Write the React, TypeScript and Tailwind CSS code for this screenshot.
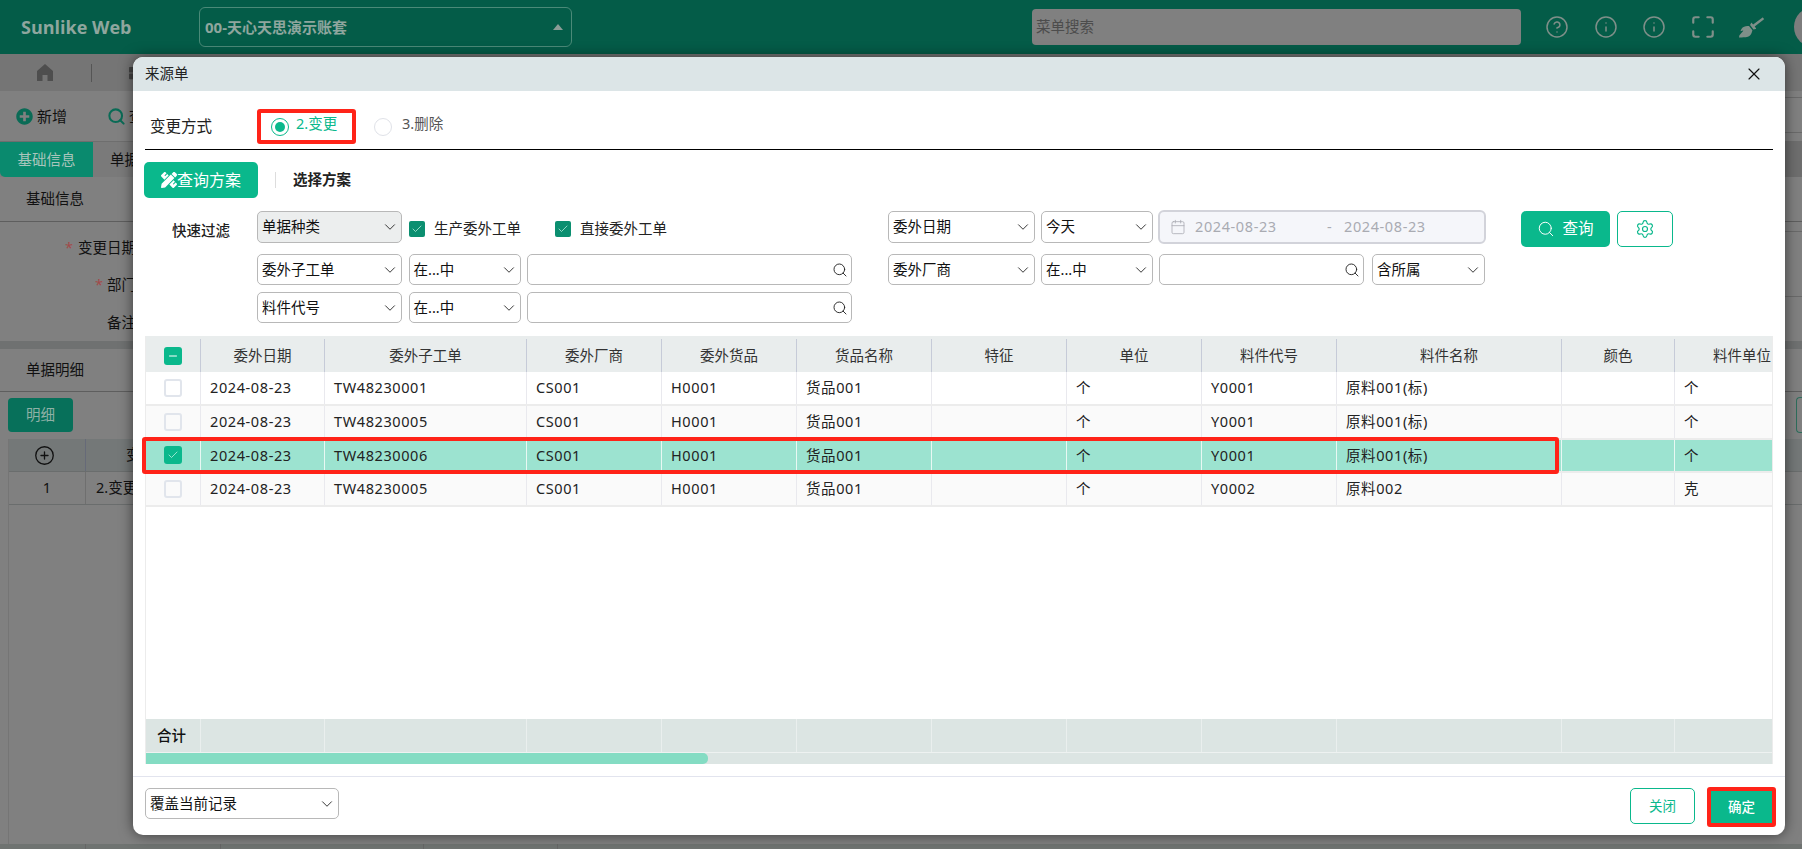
import { Calendar, ChevronDown, CircleHelp, CirclePlus, Info, Maximize, Search, Settings, X, Check, Minus } from "lucide-react";
import { FaBroom, FaPencilRuler, FaPlusCircle, FaThLarge } from "react-icons/fa";

function Sel({ w, label, grey }: { w: string; label: string; grey?: boolean }) {
  return (
    <div className={`${w} h-full flex items-center justify-between pl-[4px] pr-[2px] rounded-[5px] border-[1.5px] border-[#b8b8b8] text-[14.5px] text-[#111] ${grey ? "bg-[#eceeee]" : "bg-white"}`}>
      <span>{label}</span>
      <ChevronDown size={18} strokeWidth={1.2} className="text-[#222]" />
    </div>
  );
}

function SearchInput({ w }: { w: string }) {
  return (
    <div className={`${w} h-full flex items-center justify-end pr-[3px] rounded-[5px] border-[1.5px] border-[#b8b8b8] bg-white`}>
      <Search size={16} strokeWidth={1.4} className="text-[#222]" />
    </div>
  );
}

function Box({ label }: { label: string }) {
  return (
    <div className="h-full flex items-center">
      <span className="w-[16px] h-[16px] rounded-[2px] bg-[#0b8f70] flex items-center justify-center mt-[4px]">
        <Check size={12} strokeWidth={1.5} className="text-[#bdf1e1]" />
      </span>
      <span className="ml-[9px] text-[14.5px] text-[#222] mt-[4px]">{label}</span>
    </div>
  );
}

const widths = ["w-[55px]", "w-[124px]", "w-[202px]", "w-[135px]", "w-[135px]", "w-[135px]", "w-[135px]", "w-[135px]", "w-[135px]", "w-[225px]", "w-[113px]", "w-[135px]"];
const heads = ["委外日期", "委外子工单", "委外厂商", "委外货品", "货品名称", "特征", "单位", "料件代号", "料件名称", "颜色", "料件单位"];
const rows = [
  { id: "TW48230001", code: "Y0001", name: "原料001(标)", unit: "个", bg: "bg-white" },
  { id: "TW48230005", code: "Y0001", name: "原料001(标)", unit: "个", bg: "bg-[#fafafa]" },
  { id: "TW48230006", code: "Y0001", name: "原料001(标)", unit: "个", bg: "bg-[#9ce3d0]", sel: true },
  { id: "TW48230005", code: "Y0002", name: "原料002", unit: "克", bg: "bg-[#fafafa]" },
];

function Row({ r }: { r: (typeof rows)[number] }) {
  const cells = ["2024-08-23", r.id, "CS001", "H0001", "货品001", "", "个", r.code, r.name, "", r.unit];
  const line = r.sel ? "border-[#e8f8f3]" : "border-[#e9e9ee]";
  return (
    <div className={`flex h-[33.75px] w-[1664px] border-b-2 border-[#ececec] ${r.bg}`}>
      <div className={`${widths[0]} shrink-0 flex items-center justify-center border-r ${line}`}>
        {r.sel ? (
          <span className="w-[18px] h-[18px] rounded-[3px] bg-[#0ab88c] flex items-center justify-center">
            <Check size={12} strokeWidth={1.5} className="text-[#c4f3e4]" />
          </span>
        ) : (
          <span className="w-[18px] h-[18px] rounded-[3px] border-2 border-[#e1e5ec]" />
        )}
      </div>
      {cells.map((c, i) => (
        <div key={i} className={`${widths[i + 1]} shrink-0 flex items-center pl-[9px] border-r ${line} text-[14.5px] text-[#222] tracking-[0.6px]`}>
          {c}
        </div>
      ))}
    </div>
  );
}

function Background() {
  return (
    <div className="flex flex-col h-full">
      <div className="h-[54px] shrink-0 bg-[#045c48] flex items-center">
        <span className="shrink-0 ml-[21px] w-[178px] text-[18px] font-bold text-[#8fa69e] font-['Open_Sans',sans-serif]">Sunlike Web</span>
        <div className="shrink-0 w-[373px] h-[40px] rounded-[6px] border border-[#4b8a78] flex items-center justify-between pl-[5px] pr-[8px]">
          <span className="text-[15px] font-bold text-[#8fa69e]">00-天心天思演示账套</span>
          <span className="w-0 h-0 border-x-[5px] border-x-transparent border-b-[6px] border-b-[#8b9c96]" />
        </div>
        <div className="shrink-0 ml-[460px] w-[489px] h-[36px] rounded-[4px] bg-[#808080] flex items-center pl-[4px] text-[14.5px] text-[#4c4c4c]">菜单搜索</div>
        <div className="shrink-0 ml-[24px] flex items-center text-[#7f8f89]">
          <CircleHelp size={24} strokeWidth={1.5} className="shrink-0" />
          <Info size={24} strokeWidth={1.5} className="shrink-0 ml-[25px]" />
          <Info size={24} strokeWidth={1.5} className="shrink-0 ml-[24px]" />
          <Maximize size={26} strokeWidth={2} className="shrink-0 ml-[24px]" />
          <FaBroom size={25} className="shrink-0 ml-[23px]" />
          <span className="shrink-0 ml-[30px] w-[20px] h-[40px] rounded-l-full bg-[#7d7d7d]" />
        </div>
      </div>
      <div className="h-[37px] shrink-0 bg-[#757575] flex items-center">
        <svg width="18" height="19" viewBox="0 0 18 19" className="ml-[36px] text-[#4e4e4e]" fill="currentColor">
          <path d="M9 1 L17 8 V18 H11.5 V12 H6.5 V18 H1 V8 Z" />
        </svg>
        <span className="ml-[37px] w-px h-[18px] bg-[#555]" />
        <FaThLarge size={14} className="ml-[37px] text-[#444]" />
      </div>
      <div className="h-[51px] shrink-0 flex items-center border-b border-[#6e6e6e]">
        <FaPlusCircle size={17} className="ml-[16px] text-[#0a6b56]" />
        <span className="ml-[4px] text-[15px] text-[#111]">新增</span>
        <Search size={19} strokeWidth={2.6} className="ml-[40px] text-[#0a6b56]" />
        <span className="ml-[3px] text-[15px] text-[#111]">查</span>
        <div className="ml-auto mb-[2px] w-[17px] h-[36px] border-y border-[#6a6a6a]" />
      </div>
      <div className="h-[35px] shrink-0 flex bg-[#7a7a7a]">
        <div className="w-[93px] rounded-bl-[5px] bg-[#0a8a6e] flex items-center justify-center text-[14.5px] text-[#a9c5bc]">基础信息</div>
        <div className="pl-[17px] flex items-center text-[14.5px] text-[#111]">单据信息</div>
        <div className="ml-auto w-[17px] bg-[#6e6e6e]" />
      </div>
      <div className="h-[45px] shrink-0 pl-[26px] flex items-center border-b border-[#5e5e5e] text-[14.5px] text-[#111]">基础信息</div>
      <div className="h-[119px] shrink-0 flex">
        <div className="pt-[15px] flex flex-col items-end w-[136px] text-[14.5px] text-[#111]">
          <span><span className="text-[#a34a4a] mr-[5px]">*</span>变更日期</span>
          <span className="mt-[15px]"><span className="text-[#a34a4a] mr-[4px]">*</span>部门</span>
          <span className="mt-[16px]">备注</span>
        </div>
        <div className="ml-auto mt-[9px] w-[17px] h-[66px] border-y border-[#6a6a6a]" />
      </div>
      <div className="h-[8px] shrink-0 bg-[#6f7171]" />
      <div className="h-[43px] shrink-0 pl-[26px] flex items-center border-b border-[#5e5e5e] text-[14.5px] text-[#111]">单据明细</div>
      <div className="h-[47px] shrink-0 flex items-center pl-[8px] pb-[1px]">
        <div className="w-[65px] h-[34px] rounded-[4px] bg-[#07705a] flex items-center justify-center text-[14.5px] text-[#8fb0a6]">明细</div>
        <div className="ml-auto w-[6px] h-[36px] rounded-l-[4px] border-y border-l border-[#2e6e5c]" />
      </div>
      <div className="flex-1 ml-[8px] border-l border-[#757575] flex flex-col">
        <div className="h-[33px] shrink-0 bg-[#747878] flex items-center border-b border-[#6a6d6d]">
          <div className="w-[77px] flex justify-start pl-[25px] border-r border-[#666a78] h-full items-center">
            <CirclePlus size={21} strokeWidth={1.5} className="text-[#111]" />
          </div>
          <div className="pl-[40px] text-[14.5px] text-[#111]">变</div>
        </div>
        <div className="h-[33px] shrink-0 flex items-center border-b border-[#6a6d6d] text-[14.5px] text-[#111]">
          <div className="w-[77px] h-full flex items-center justify-center border-r border-[#6f6f6f]">1</div>
          <div className="pl-[10px]">2.变更</div>
        </div>
      </div>
      <div className="h-[5px] shrink-0 bg-[#6f7371] flex">
        <div className="w-[86px] border-r border-[#666]" />
        <div className="w-[135px] border-r border-[#666]" />
        <div className="w-[203px] border-r border-[#666]" />
        <div className="w-[134px] border-r border-[#666]" />
      </div>
    </div>
  );
}

export default function App() {
  return (
    <div className="relative h-[849px] w-[1802px] overflow-hidden bg-[#808080] font-['Noto_Sans','Noto_Sans_CJK_SC',sans-serif]">
      <Background />
      <div className="absolute left-[133px] top-[57px] w-[1652px] h-[778px] rounded-[10px] bg-white shadow-[0_0_14px_rgba(0,0,0,0.55)] flex flex-col">
        <div className="h-[34px] shrink-0 rounded-t-[10px] bg-[#dce5e7] flex items-center justify-between pl-[12px] pr-[21px]">
          <span className="text-[14.5px] text-[#222]">来源单</span>
          <X size={20} strokeWidth={1.4} className="text-[#111]" />
        </div>
        <div className="px-[12px]">
          <div className="h-[59px] border-b border-black pt-[13px] flex items-center">
            <div className="w-[112px] pl-[5px] text-[15.5px] text-[#222]">变更方式</div>
            <div className="w-[99px] h-[35px] rounded-[3px] border-[4px] border-[#ff2318] flex items-center pl-[10px]">
              <span className="w-[18px] h-[18px] rounded-full border border-[#0ab88c] flex items-center justify-center">
                <span className="w-[10px] h-[10px] rounded-full bg-[#0ab88c]" />
              </span>
              <span className="ml-[7px] text-[14.5px] text-[#0ab88c] -mt-[5px]">2.变更</span>
            </div>
            <span className="ml-[18px] w-[18px] h-[18px] rounded-full border border-[#e0e2e8]" />
            <span className="ml-[10px] text-[14.5px] text-[#555] -mt-[5px]">3.删除</span>
          </div>
          <div className="mt-[12px] h-[36px] flex items-center">
            <div className="-ml-px w-[114px] h-full rounded-[5px] bg-[#0ab88c] flex items-center pl-[17px] text-[16px] text-white">
              <FaPencilRuler size={16} />
              <span>查询方案</span>
            </div>
            <span className="ml-[17px] w-px h-[16px] bg-[#dddddd]" />
            <span className="ml-[17px] text-[14.5px] font-bold text-[#222]">选择方案</span>
          </div>
          <div className="mt-[13px] h-[112px] flex">
            <div className="w-[112px] pl-[27px] pt-[9px] text-[14.5px] font-medium text-[#222]">快速过滤</div>
            <div className="w-[595px] shrink-0">
              <div className="h-[32px] flex">
                <Sel w="w-[145px]" label="单据种类" grey />
                <div className="ml-[7px]"><Box label="生产委外工单" /></div>
                <div className="ml-[34px]"><Box label="直接委外工单" /></div>
              </div>
              <div className="mt-[11px] h-[31px] flex gap-[6.5px]">
                <Sel w="w-[145px]" label="委外子工单" />
                <Sel w="w-[112px]" label="在...中" />
                <SearchInput w="w-[325px]" />
              </div>
              <div className="mt-[7px] h-[31px] flex gap-[6.5px]">
                <Sel w="w-[145px]" label="料件代号" />
                <Sel w="w-[112px]" label="在...中" />
                <SearchInput w="w-[325px]" />
              </div>
            </div>
            <div className="ml-[36px] w-[598px] shrink-0">
              <div className="h-[32px] flex">
                <Sel w="w-[147px]" label="委外日期" />
                <div className="ml-[6px] h-full"><Sel w="w-[112px]" label="今天" /></div>
                <div className="ml-[5px] -mt-px w-[328px] h-[34px] rounded-[6px] border-2 border-[#d2d3da] bg-[#f5f6fa] flex items-center pl-[10px] text-[14.5px] tracking-[0.6px] text-[#a9abb2]">
                  <Calendar size={16} strokeWidth={1.2} className="shrink-0" />
                  <span className="ml-[9px] w-[132px] shrink-0">2024-08-23</span>
                  <span className="w-[17px] shrink-0">-</span>
                  <span>2024-08-23</span>
                </div>
              </div>
              <div className="mt-[11px] h-[31px] flex">
                <Sel w="w-[147px]" label="委外厂商" />
                <div className="ml-[6px] h-full"><Sel w="w-[112px]" label="在...中" /></div>
                <div className="ml-[6px] h-full"><SearchInput w="w-[205px]" /></div>
                <div className="ml-[8px] h-full"><Sel w="w-[113px]" label="含所属" /></div>
              </div>
            </div>
            <div className="ml-[35px] flex h-[36px] gap-[7px]">
              <div className="w-[89px] rounded-[5px] bg-[#0ab88c] flex items-center justify-center text-[15.5px] text-white">
                <Search size={18} strokeWidth={1.3} className="mr-[7px]" />
                <span>查询</span>
              </div>
              <div className="w-[56px] rounded-[5px] border border-[#0ab88c] flex items-center justify-center">
                <Settings size={20} strokeWidth={1.4} className="text-[#0ab88c]" />
              </div>
            </div>
          </div>
          <div className="relative mt-[13px] h-[428px]">
            <div className="h-full flex flex-col border-x border-[#ececec] overflow-hidden">
              <div className="h-[3px] shrink-0 bg-[#e9eded]" />
              <div className="flex h-[33px] shrink-0 w-[1664px] bg-[#e9eded]">
                <div className={`${widths[0]} shrink-0 flex items-center justify-center border-r border-[#c6cbd8]`}>
                  <span className="w-[18px] h-[18px] rounded-[3px] bg-[#0ab88c] flex items-center justify-center">
                    <Minus size={12} strokeWidth={2} className="text-white" />
                  </span>
                </div>
                {heads.map((h, i) => (
                  <div key={h} className={`${widths[i + 1]} shrink-0 flex items-center justify-center border-r border-[#c6cbd8] text-[14.5px] text-[#333]`}>
                    {h}
                  </div>
                ))}
              </div>
              {rows.map((r, i) => (
                <Row key={i} r={r} />
              ))}
              <div className="flex-1" />
              <div className="flex h-[34px] shrink-0 w-[1664px] bg-[#dce5e3] border-b border-[#eef2f1]">
                {widths.map((w, i) => (
                  <div key={w + i} className={`${w} shrink-0 flex items-center border-r border-[#eaefee] ${i === 0 ? "pl-[11px] text-[14.5px] font-medium text-[#111]" : ""}`}>
                    {i === 0 ? "合计" : ""}
                  </div>
                ))}
              </div>
              <div className="h-[11px] shrink-0 bg-[#dce5e3]">
                <div className="h-full w-[562px] rounded-r-[5px] bg-[#84dcc3]" />
              </div>
            </div>
            <div className="absolute left-[-3px] top-[101px] w-[1417px] h-[37px] rounded-[3px] border-[4px] border-[#ff2318]" />
          </div>
        </div>
        <div className="mt-[12px] flex-1 border-t border-[#e2e4ee] rounded-b-[10px] px-[12px] pt-[11px] flex items-start">
          <div className="h-[31px]"><Sel w="w-[194px]" label="覆盖当前记录" /></div>
          <div className="ml-auto w-[65px] h-[36px] rounded-[5px] border border-[#0ab88c] flex items-center justify-center text-[13.5px] text-[#0ab88c]">关闭</div>
          <div className="ml-[12px] -mr-[3px] -mt-px w-[69px] h-[40px] rounded-[3px] border-[4px] border-[#ff2318] bg-[#0ab88c] flex items-center justify-center text-[13.5px] font-medium text-white">确定</div>
        </div>
      </div>
    </div>
  );
}
